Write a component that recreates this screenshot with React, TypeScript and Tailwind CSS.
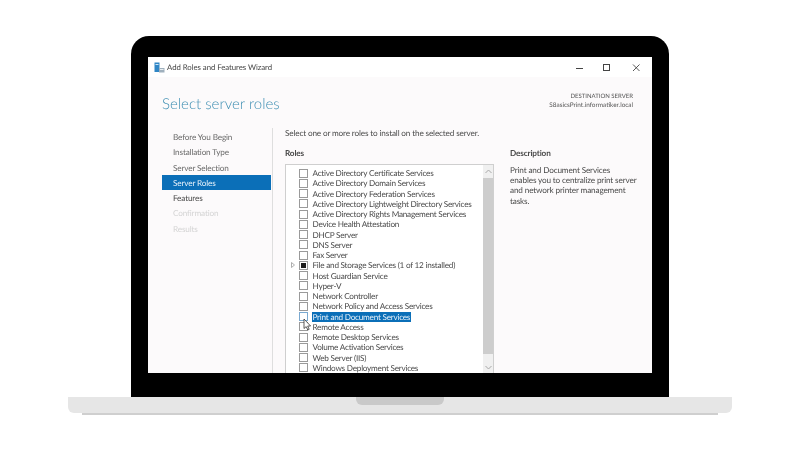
const navItems = [
  { label: "Before You Begin", tone: "text-[#6a6a6a]" },
  { label: "Installation Type", tone: "text-[#6a6a6a]" },
  { label: "Server Selection", tone: "text-[#6a6a6a]" },
  { label: "Server Roles", tone: "bg-[#0b6fb8] text-[#e8f2fa]" },
  { label: "Features", tone: "text-[#4a4a4a]" },
  { label: "Confirmation", tone: "text-[#d4d4d4]" },
  { label: "Results", tone: "text-[#d4d4d4]" },
];

const roles = [
  "Active Directory Certificate Services",
  "Active Directory Domain Services",
  "Active Directory Federation Services",
  "Active Directory Lightweight Directory Services",
  "Active Directory Rights Management Services",
  "Device Health Attestation",
  "DHCP Server",
  "DNS Server",
  "Fax Server",
  "File and Storage Services (1 of 12 installed)",
  "Host Guardian Service",
  "Hyper-V",
  "Network Controller",
  "Network Policy and Access Services",
  "Print and Document Services",
  "Remote Access",
  "Remote Desktop Services",
  "Volume Activation Services",
  "Web Server (IIS)",
  "Windows Deployment Services",
];

function WizardIcon() {
  return (
    <svg width="11" height="11" viewBox="0 0 11 11">
      <rect x="0.5" y="0.5" width="5" height="9.5" fill="#2f86c5" />
      <rect x="1.5" y="2" width="3" height="1" fill="#cfe6f7" />
      <rect x="5" y="6" width="5.5" height="4.5" fill="#9fb0bd" />
      <rect x="6" y="7" width="3.5" height="1" fill="#e8eef2" />
    </svg>
  );
}

function RoleRow({ label, index }: { label: string; index: number }) {
  const isFile = index === 9;
  const isPrint = index === 14;
  return (
    <div className="flex h-[10.25px] items-center">
      <div className="flex w-[12px] shrink-0 justify-center">
        {isFile ? (
          <svg width="4" height="6" viewBox="0 0 4 6">
            <path d="M0.5 0.5 L3.5 3 L0.5 5.5 Z" fill="none" stroke="#9a9a9a" strokeWidth="0.8" />
          </svg>
        ) : null}
      </div>
      <div
        className={`flex h-[9px] w-[9px] shrink-0 items-center justify-center border ${
          isPrint ? "border-[#7aa9d0]" : "border-[#9a9a9a]"
        } bg-white`}
      >
        {isFile ? <div className="h-[5px] w-[5px] bg-[#1c1c1c]" /> : null}
      </div>
      <span
        className={`ml-[4px] whitespace-nowrap px-[1px] leading-[10px] tracking-[-0.24px] ${
          isPrint ? "bg-[#0b6fb8] text-[#e8f2fa]" : "text-[#4a4a4a]"
        }`}
      >
        {label}
      </span>
    </div>
  );
}

function RolesList() {
  return (
    <div className="relative flex h-[209px] w-[209px] overflow-hidden border border-b-0 border-[#cfcfcf] bg-white">
      <div className="min-w-0 flex-1 pl-[0.5px] pt-[3px]">
        {roles.map((role, index) => (
          <RoleRow key={role} label={role} index={index} />
        ))}
      </div>
      <div className="flex w-[10px] shrink-0 flex-col items-center bg-[#f0f0f0]">
        <svg className="mt-[4px] shrink-0" width="7" height="5" viewBox="0 0 7 5">
          <path d="M0.5 4 L3.5 1 L6.5 4" fill="none" stroke="#a8a8a8" strokeWidth="1" />
        </svg>
        <div className="mt-[4px] h-[176px] w-full shrink-0 bg-[#cdcdcd]" />
        <svg className="mt-[11px] shrink-0" width="7" height="5" viewBox="0 0 7 5">
          <path d="M0.5 1 L3.5 4 L6.5 1" fill="none" stroke="#a8a8a8" strokeWidth="1" />
        </svg>
      </div>
      <svg className="absolute left-[17px] top-[153px]" width="9" height="13" viewBox="0 0 9 13">
        <path d="M1 1 L1 10.5 L3.2 8.6 L4.8 12 L6.2 11.3 L4.7 8 L7.6 8 Z" fill="#fff" stroke="#333" strokeWidth="0.8" />
      </svg>
    </div>
  );
}

function Wizard() {
  return (
    <div className="flex h-[316px] w-[504px] flex-col overflow-hidden bg-[#fcfafb] font-['Lato',sans-serif] text-[8.2px] tracking-[-0.15px] text-[#4a4a4a] blur-[0.3px] [text-rendering:geometricPrecision]">
      <div className="flex h-[20px] shrink-0 items-center bg-white pl-[6px] pr-[11px]">
        <WizardIcon />
        <span className="ml-[2px] flex-1 pt-[1px] text-[7.8px] tracking-[-0.05px] text-[#444]">Add Roles and Features Wizard</span>
        <svg className="mr-[-5px] mt-[1px]" width="70" height="10" viewBox="0 0 70 10">
          <path d="M0 5.5 H7" stroke="#444" strokeWidth="1" />
          <rect x="27.5" y="1.5" width="6" height="6" fill="none" stroke="#444" strokeWidth="1" />
          <path d="M57 1.5 L63.5 8 M63.5 1.5 L57 8" stroke="#444" strokeWidth="0.9" />
        </svg>
      </div>

      <div className="flex h-[51px] shrink-0 justify-between pl-[14px] pr-[19px]">
        <h1 className="pt-[15px] text-[15px] font-light leading-[24px] tracking-normal text-[#3f8fb3]">Select server roles</h1>
        <div className="pt-[15px] text-right leading-[9px] tracking-normal text-[#555]">
          <div className="text-[6px]">DESTINATION SERVER</div>
          <div className="text-[6.4px]">S8asicsPrint.informatiker.local</div>
        </div>
      </div>

      <div className="flex min-h-0 flex-1">
        <div className="ml-[14px] w-[109px] shrink-0 pt-[1px]">
          {navItems.map((item) => (
            <div key={item.label} className={`flex h-[15.3px] items-center pl-[11px] pt-[1px] ${item.tone}`}>
              {item.label}
            </div>
          ))}
        </div>
        <div className="ml-[1px] w-px shrink-0 bg-[#dedede]" />
        <div className="min-w-0 flex-1 pl-[12px]">
          <p className="h-[20px] leading-[10px] text-[#4a4a4a]">
            Select one or more roles to install on the selected server.
          </p>
          <div className="flex">
            <div className="w-[225px] shrink-0">
              <div className="h-[16px] font-bold leading-[10px]">Roles</div>
              <RolesList />
            </div>
            <div className="w-[130px]">
              <div className="h-[16px] font-bold leading-[10px]">Description</div>
              <p className="pt-[0.5px] leading-[10.4px]">
                Print and Document Services
                <br />
                enables you to centralize print server
                <br />
                and network printer management
                <br />
                tasks.
              </p>
            </div>
          </div>
        </div>
      </div>
    </div>
  );
}

export default function App() {
  return (
    <div className="flex h-[450px] w-[800px] flex-col items-center overflow-hidden bg-white pt-[36px]">
      <div className="flex h-[361px] w-[538px] shrink-0 justify-center rounded-t-[18px] bg-black pt-[21px]">
        <Wizard />
      </div>
      <div className="flex h-[16px] w-[664px] shrink-0 justify-center rounded-b-[6px] bg-[#e6e6e6]">
        <div className="h-[8px] w-[88px] rounded-b-[6px] bg-[#c9c9c9]" />
      </div>
      <div className="h-[2px] w-[636px] shrink-0 bg-[#cfcfcf]" />
    </div>
  );
}
